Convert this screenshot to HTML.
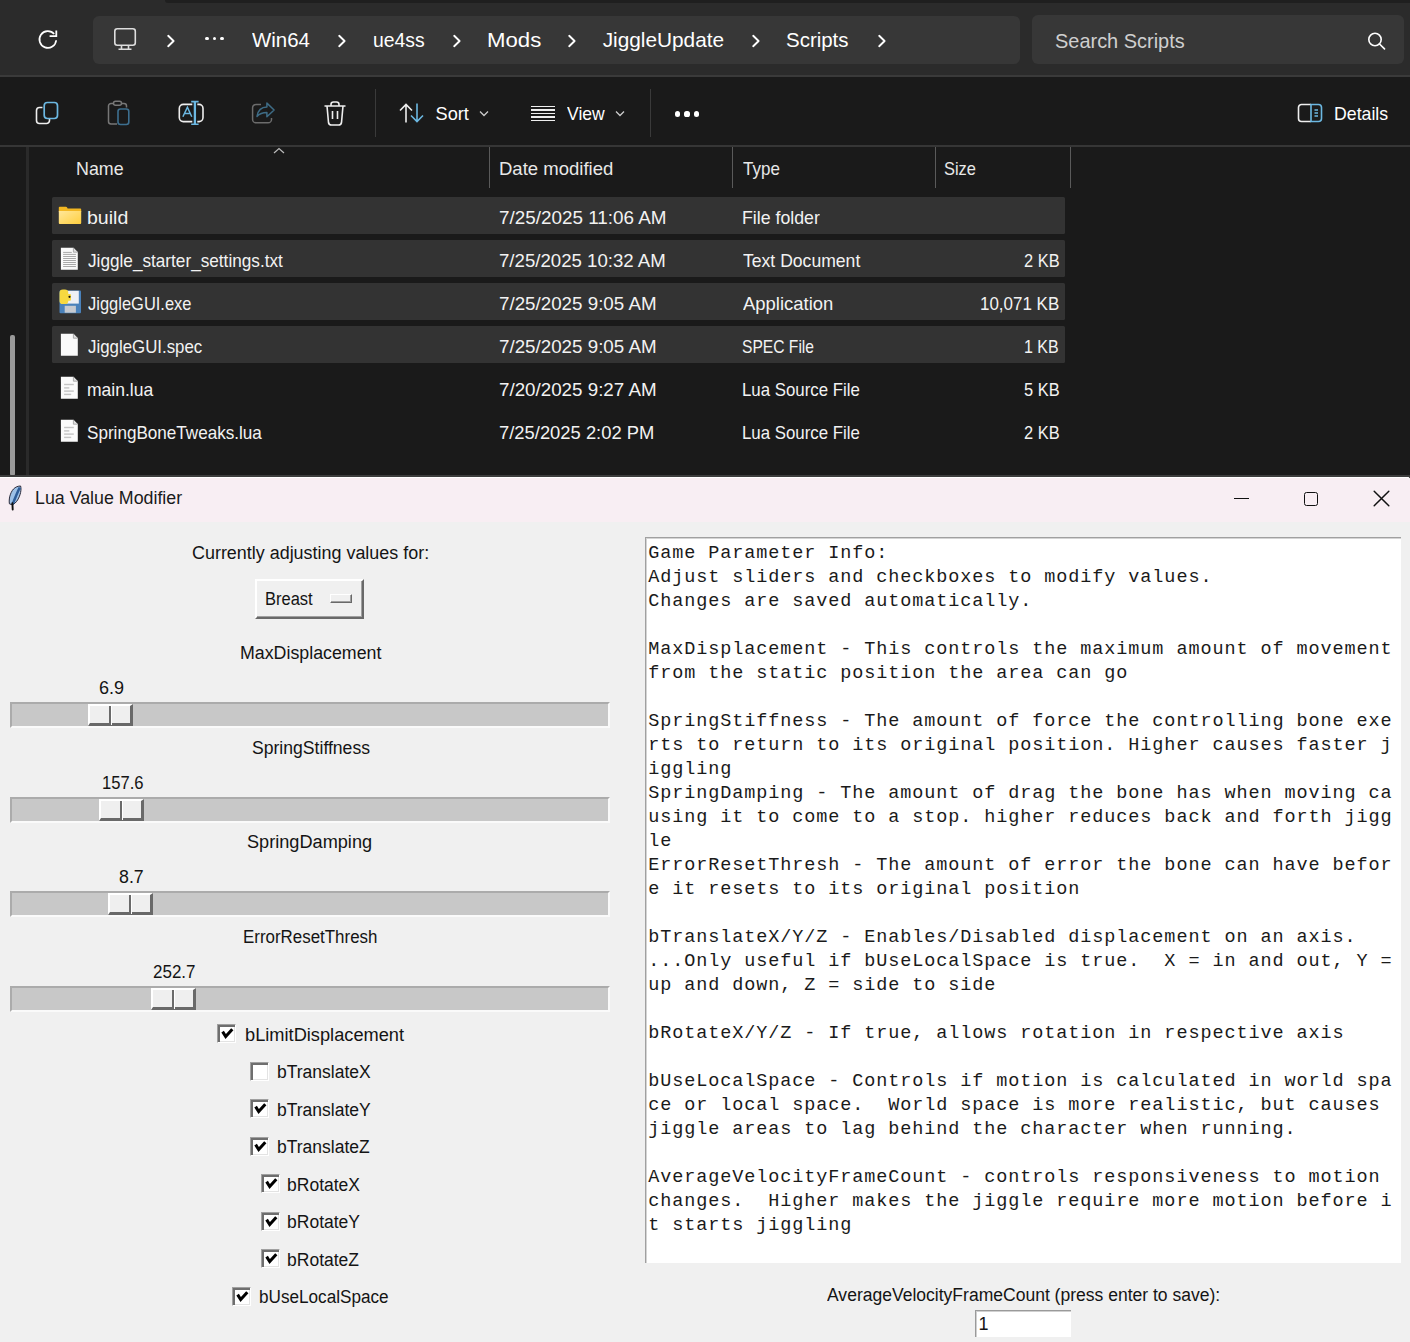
<!DOCTYPE html>
<html><head><meta charset="utf-8"><title>Explorer + Lua Value Modifier</title>
<style>
html,body{margin:0;padding:0}
body{width:1410px;height:1342px;position:relative;overflow:hidden;background:#f0f0f0;font-family:"Liberation Sans",sans-serif}
.t{position:absolute;white-space:nowrap;line-height:1;transform-origin:0 0}
.mono{position:absolute;margin:0;font-family:"Liberation Mono",monospace;font-size:18.5px;letter-spacing:0.9px;line-height:24px;color:#1a1a1a}
</style></head><body>
<div style="position:absolute;left:0px;top:0px;width:1410px;height:490px;background:#1a1a1a"></div>
<div style="position:absolute;left:0px;top:0px;width:1410px;height:75px;background:#2b2b2b"></div>
<div style="position:absolute;left:165px;top:0px;width:1245px;height:3px;background:#1f1f1f;border-bottom-left-radius:4px"></div>
<div style="position:absolute;left:0px;top:75px;width:1410px;height:2px;background:#3a3a3a"></div>
<div style="position:absolute;left:0px;top:145px;width:1410px;height:2px;background:#363636"></div>
<div style="position:absolute;left:93px;top:16px;width:927px;height:48px;background:#373737;border-radius:6px"></div>
<div style="position:absolute;left:1032px;top:15px;width:372px;height:49px;background:#373737;border-radius:6px"></div>
<svg style="position:absolute;left:37px;top:28px" width="24" height="24" viewBox="0 0 24 24"><path d="M19.2 12.2 A8.4 8.4 0 1 1 17.2 6.0" fill="none" stroke="#fff" stroke-width="1.7"/><path d="M12.6 8.2 H19.3 V2.5" fill="none" stroke="#fff" stroke-width="1.8"/></svg>
<svg style="position:absolute;left:113px;top:27px" width="25" height="24" viewBox="0 0 25 24"><rect x="1.8" y="1.8" width="20.5" height="16.5" rx="2.5" fill="none" stroke="#ddd" stroke-width="1.6"/><path d="M8.5 18.5 V22 M15.5 18.5 V22 M5.5 22.3 H18.5" stroke="#ddd" stroke-width="1.6"/></svg>
<svg style="position:absolute;left:165.5px;top:34px" width="10" height="14" viewBox="0 0 10 14"><path d="M2.2 1.8 L7.6 7 L2.2 12.2" fill="none" stroke="#fff" stroke-width="1.9" stroke-linecap="round" stroke-linejoin="round"/></svg>
<svg style="position:absolute;left:336.5px;top:34px" width="10" height="14" viewBox="0 0 10 14"><path d="M2.2 1.8 L7.6 7 L2.2 12.2" fill="none" stroke="#fff" stroke-width="1.9" stroke-linecap="round" stroke-linejoin="round"/></svg>
<svg style="position:absolute;left:451.5px;top:34px" width="10" height="14" viewBox="0 0 10 14"><path d="M2.2 1.8 L7.6 7 L2.2 12.2" fill="none" stroke="#fff" stroke-width="1.9" stroke-linecap="round" stroke-linejoin="round"/></svg>
<svg style="position:absolute;left:566.5px;top:34px" width="10" height="14" viewBox="0 0 10 14"><path d="M2.2 1.8 L7.6 7 L2.2 12.2" fill="none" stroke="#fff" stroke-width="1.9" stroke-linecap="round" stroke-linejoin="round"/></svg>
<svg style="position:absolute;left:750.5px;top:34px" width="10" height="14" viewBox="0 0 10 14"><path d="M2.2 1.8 L7.6 7 L2.2 12.2" fill="none" stroke="#fff" stroke-width="1.9" stroke-linecap="round" stroke-linejoin="round"/></svg>
<svg style="position:absolute;left:876.5px;top:34px" width="10" height="14" viewBox="0 0 10 14"><path d="M2.2 1.8 L7.6 7 L2.2 12.2" fill="none" stroke="#fff" stroke-width="1.9" stroke-linecap="round" stroke-linejoin="round"/></svg>
<div style="position:absolute;left:205.4px;top:37px;width:3.2px;height:3.2px;background:#fff;border-radius:50%"></div>
<div style="position:absolute;left:212.9px;top:37px;width:3.2px;height:3.2px;background:#fff;border-radius:50%"></div>
<div style="position:absolute;left:220.4px;top:37px;width:3.2px;height:3.2px;background:#fff;border-radius:50%"></div>
<div class="t" style="left:251.6px;top:30.2px;font-size:20.8px;color:#fff;transform:scaleX(0.9831);">Win64</div>
<div class="t" style="left:372.8px;top:30.2px;font-size:20.8px;color:#fff;transform:scaleX(0.9315);">ue4ss</div>
<div class="t" style="left:486.8px;top:30.2px;font-size:20.8px;color:#fff;transform:scaleX(1.0667);">Mods</div>
<div class="t" style="left:602.7px;top:30.2px;font-size:20.8px;color:#fff;transform:scaleX(1.0000);">JiggleUpdate</div>
<div class="t" style="left:786.2px;top:30.2px;font-size:20.8px;color:#fff;transform:scaleX(0.9839);">Scripts</div>
<div class="t" style="left:1054.5px;top:30.6px;font-size:20.8px;color:#cfcfcf;transform:scaleX(0.9590);">Search Scripts</div>
<svg style="position:absolute;left:1366px;top:30px" width="22" height="22" viewBox="0 0 22 22"><circle cx="9" cy="9.5" r="6.2" fill="none" stroke="#fff" stroke-width="1.6"/><path d="M13.5 14 L18.5 18.8" stroke="#fff" stroke-width="1.7" stroke-linecap="round"/></svg>
<svg style="position:absolute;left:34px;top:100px" width="28" height="28" viewBox="0 0 28 28"><path d="M8.5 7.5 H5.5 A3 3 0 0 0 2.5 10.5 V20.5 A3 3 0 0 0 5.5 23.5 H12.5 A3 3 0 0 0 15.5 20.5 V19" fill="none" stroke="#eee" stroke-width="1.6"/><rect x="10.2" y="2.5" width="13.3" height="16" rx="3.2" fill="none" stroke="#6cb8e2" stroke-width="1.7"/></svg>
<svg style="position:absolute;left:106px;top:99px" width="28" height="28" viewBox="0 0 28 28"><path d="M7 4.5 H5 A2.5 2.5 0 0 0 2.5 7 V22.5 A2.5 2.5 0 0 0 5 25 H11 M16 4.5 H18 A2.5 2.5 0 0 1 20.5 7 V8.5" fill="none" stroke="#777" stroke-width="1.5"/><rect x="7.5" y="2.2" width="8" height="4" rx="2" fill="none" stroke="#777" stroke-width="1.5"/><rect x="12" y="10" width="10.8" height="15.5" rx="2.5" fill="none" stroke="#3d6f8f" stroke-width="1.6"/></svg>
<svg style="position:absolute;left:172px;top:96px" width="38" height="34" viewBox="0 0 38 34"><path d="M20.3 8.4 H11.3 A4 4 0 0 0 7.3 12.4 V21.6 A4 4 0 0 0 11.3 25.6 H20.3 M25.3 8.4 H27 A4 4 0 0 1 31 12.4 V21.6 A4 4 0 0 1 27 25.6 H25.3" fill="none" stroke="#eee" stroke-width="1.6"/><path d="M22.9 5.8 V28" stroke="#6cb8e2" stroke-width="2.3"/><path d="M19.2 5.6 H26.6 M19.2 28.2 H26.6" stroke="#6cb8e2" stroke-width="1.6"/><path d="M10.9 20.8 L15.4 11.3 L19.8 20.8 M12.4 17.5 H18.4" fill="none" stroke="#6cb8e2" stroke-width="1.5"/></svg>
<svg style="position:absolute;left:246px;top:96px" width="36" height="34" viewBox="0 0 36 34"><path d="M15 8.4 H10 A3.4 3.4 0 0 0 6.6 11.8 V23.4 A3.4 3.4 0 0 0 10 26.8 H22.1 A3.4 3.4 0 0 0 25.5 23.4 V21.9" fill="none" stroke="#6c6c6c" stroke-width="1.5"/><path d="M11 20.4 C12 14 15.5 11 20.9 11 V7.1 L28.1 14 L20.9 20.7 V16.6 C16.5 16.6 13.5 17.8 11 20.4 Z" fill="none" stroke="#3e6c86" stroke-width="1.5" stroke-linejoin="round"/></svg>
<svg style="position:absolute;left:322px;top:100px" width="26" height="28" viewBox="0 0 26 28"><path d="M2.5 6 H23.5 M9 6 V4.5 A2.5 2.5 0 0 1 11.5 2 H14.5 A2.5 2.5 0 0 1 17 4.5 V6 M5 6 L6.5 22.5 A3 3 0 0 0 9.5 25 H16.5 A3 3 0 0 0 19.5 22.5 L21 6 M10.5 11 V19 M15.5 11 V19" fill="none" stroke="#eee" stroke-width="1.6"/></svg>
<div style="position:absolute;left:375px;top:89px;width:1px;height:48px;background:#3a3a3a"></div>
<div style="position:absolute;left:650px;top:89px;width:1px;height:48px;background:#3a3a3a"></div>
<svg style="position:absolute;left:398px;top:102px" width="28" height="22" viewBox="0 0 28 22"><path d="M8 20.5 V2.5 M2 8.5 L8 2.5 L14 8.5" fill="none" stroke="#eee" stroke-width="1.6"/><path d="M19 1.5 V19.5 M13 13.5 L19 19.5 L25 13.5" fill="none" stroke="#6cb8e2" stroke-width="1.6"/></svg>
<div class="t" style="left:435.5px;top:104.8px;font-size:18.2px;color:#fff;transform:scaleX(1.0000);">Sort</div>
<svg style="position:absolute;left:478.5px;top:110px" width="10" height="7" viewBox="0 0 10 7"><path d="M1 1.5 L5 5.5 L9 1.5" fill="none" stroke="#ccc" stroke-width="1.3"/></svg>
<div style="position:absolute;left:531px;top:105.5px;width:24px;height:1.5px;background:#eee"></div>
<div style="position:absolute;left:531px;top:109.1px;width:24px;height:1.5px;background:#eee"></div>
<div style="position:absolute;left:531px;top:112.7px;width:24px;height:1.5px;background:#eee"></div>
<div style="position:absolute;left:531px;top:116.3px;width:24px;height:1.5px;background:#eee"></div>
<div style="position:absolute;left:531px;top:119.9px;width:24px;height:1.5px;background:#eee"></div>
<div class="t" style="left:567.0px;top:104.6px;font-size:18.2px;color:#fff;transform:scaleX(0.9641);">View</div>
<svg style="position:absolute;left:614.5px;top:110px" width="10" height="7" viewBox="0 0 10 7"><path d="M1 1.5 L5 5.5 L9 1.5" fill="none" stroke="#ccc" stroke-width="1.3"/></svg>
<div style="position:absolute;left:674.9px;top:111.4px;width:5.2px;height:5.2px;background:#fff;border-radius:50%"></div>
<div style="position:absolute;left:684.4px;top:111.4px;width:5.2px;height:5.2px;background:#fff;border-radius:50%"></div>
<div style="position:absolute;left:693.9px;top:111.4px;width:5.2px;height:5.2px;background:#fff;border-radius:50%"></div>
<svg style="position:absolute;left:1296px;top:102px" width="28" height="22" viewBox="0 0 28 22"><path d="M15 2.5 H5.5 A3 3 0 0 0 2.5 5.5 V16.5 A3 3 0 0 0 5.5 19.5 H15" fill="none" stroke="#eee" stroke-width="1.6"/><path d="M15 2.5 H22.5 A3 3 0 0 1 25.5 5.5 V16.5 A3 3 0 0 1 22.5 19.5 H15 Z" fill="none" stroke="#6cb8e2" stroke-width="1.6"/><path d="M18.5 8 H22 M18.5 11 H22 M18.5 14 H22" stroke="#6cb8e2" stroke-width="1.4"/></svg>
<div class="t" style="left:1333.8px;top:104.6px;font-size:18.2px;color:#fff;transform:scaleX(0.9741);">Details</div>
<div style="position:absolute;left:26px;top:147px;width:3px;height:328px;background:#2a2a2a"></div>
<div style="position:absolute;left:10px;top:335px;width:5px;height:141px;background:#9a9a9a;border-radius:2px"></div>
<div style="position:absolute;left:489px;top:147px;width:1px;height:41px;background:#5a5a5a"></div>
<div style="position:absolute;left:732px;top:147px;width:1px;height:41px;background:#5a5a5a"></div>
<div style="position:absolute;left:935px;top:147px;width:1px;height:41px;background:#5a5a5a"></div>
<div style="position:absolute;left:1070px;top:147px;width:1px;height:41px;background:#5a5a5a"></div>
<svg style="position:absolute;left:272px;top:147px" width="14" height="8" viewBox="0 0 14 8"><path d="M2 6 L7 1.5 L12 6" fill="none" stroke="#bbb" stroke-width="1.2"/></svg>
<div class="t" style="left:75.5px;top:160.4px;font-size:18.2px;color:#e8e8e8;transform:scaleX(0.9809);">Name</div>
<div class="t" style="left:498.8px;top:159.6px;font-size:18.2px;color:#e8e8e8;transform:scaleX(1.0182);">Date modified</div>
<div class="t" style="left:742.5px;top:159.6px;font-size:18.2px;color:#e8e8e8;transform:scaleX(0.9359);">Type</div>
<div class="t" style="left:944.4px;top:159.6px;font-size:18.2px;color:#e8e8e8;transform:scaleX(0.9029);">Size</div>
<div style="position:absolute;left:52px;top:197px;width:1013px;height:37px;background:#333333;border-radius:1.5px"></div>
<div class="t" style="left:87.2px;top:208.6px;font-size:18.2px;color:#f2f2f2;transform:scaleX(1.0750);">build</div>
<div class="t" style="left:498.8px;top:208.6px;font-size:18.2px;color:#f2f2f2;transform:scaleX(1.0371);">7/25/2025 11:06 AM</div>
<div class="t" style="left:741.5px;top:208.6px;font-size:18.2px;color:#f2f2f2;transform:scaleX(0.9747);">File folder</div>
<svg style="position:absolute;left:54px;top:200px" width="32" height="32" viewBox="0 0 32 32"><defs><linearGradient id="fg0" x1="0" y1="0" x2="1" y2="1"><stop offset="0" stop-color="#ffe79a"/><stop offset="1" stop-color="#ffcf3f"/></linearGradient></defs><path d="M4.8 7.6 A0.9 0.9 0 0 1 5.7 6.7 H12 C12.8 6.7 13.2 7.4 13.6 8.6 H26.3 A0.9 0.9 0 0 1 27.2 9.5 V12 H4.8 Z" fill="#f2b722"/><path d="M4.8 11 H27.2 V23 A0.9 0.9 0 0 1 26.3 23.9 H5.7 A0.9 0.9 0 0 1 4.8 23 Z" fill="url(#fg0)"/></svg>
<div style="position:absolute;left:52px;top:240px;width:1013px;height:37px;background:#333333;border-radius:1.5px"></div>
<div class="t" style="left:88.3px;top:251.6px;font-size:18.2px;color:#f2f2f2;transform:scaleX(0.9447);">Jiggle_starter_settings.txt</div>
<div class="t" style="left:498.8px;top:251.6px;font-size:18.2px;color:#f2f2f2;transform:scaleX(1.0242);">7/25/2025 10:32 AM</div>
<div class="t" style="left:742.5px;top:251.6px;font-size:18.2px;color:#f2f2f2;transform:scaleX(0.9669);">Text Document</div>
<div class="t" style="left:1023.5px;top:251.6px;font-size:18.2px;color:#f2f2f2;transform:scaleX(0.9026);">2 KB</div>
<svg style="position:absolute;left:54px;top:243px" width="32" height="32" viewBox="0 0 32 32"><path d="M6.9 4.8 H19.4 L23.8 9.2 V26.7 H6.9 Z" fill="#fafafa"/><path d="M19.4 4.8 V9.2 H23.8" fill="#e0e0e0" stroke="#9a9a9a" stroke-width="0.8"/><rect x="9.1" y="8.9" width="8.7" height="1" fill="#a9a9a9"/><rect x="9.1" y="10.9" width="12.8" height="1" fill="#a9a9a9"/><rect x="9.1" y="13.0" width="12.8" height="1" fill="#a9a9a9"/><rect x="9.1" y="15.0" width="12.8" height="1" fill="#a9a9a9"/><rect x="9.1" y="17.0" width="12.8" height="1" fill="#a9a9a9"/><rect x="9.1" y="19.0" width="12.8" height="1" fill="#a9a9a9"/><rect x="9.1" y="21.0" width="12.8" height="1" fill="#a9a9a9"/><rect x="9.1" y="23.0" width="12.8" height="1" fill="#a9a9a9"/></svg>
<div style="position:absolute;left:52px;top:283px;width:1013px;height:37px;background:#333333;border-radius:1.5px"></div>
<div class="t" style="left:88.3px;top:294.6px;font-size:18.2px;color:#f2f2f2;transform:scaleX(0.9061);">JiggleGUI.exe</div>
<div class="t" style="left:498.8px;top:294.6px;font-size:18.2px;color:#f2f2f2;transform:scaleX(1.0320);">7/25/2025 9:05 AM</div>
<div class="t" style="left:742.5px;top:294.6px;font-size:18.2px;color:#f2f2f2;transform:scaleX(1.0148);">Application</div>
<div class="t" style="left:980.4px;top:294.6px;font-size:18.2px;color:#f2f2f2;transform:scaleX(0.9325);">10,071 KB</div>
<svg style="position:absolute;left:54px;top:286px" width="32" height="32" viewBox="0 0 32 32"><rect x="5.5" y="4.5" width="21.5" height="22.7" rx="1" fill="#4a82bb"/><rect x="12.6" y="4.8" width="12.2" height="12.8" fill="#eef0f4"/><rect x="10.7" y="19.8" width="11.2" height="6.9" fill="#c6cad0"/><path d="M5.5 7 A3.4 3.4 0 0 1 8.9 3.6 H10.9 A3.4 3.4 0 0 1 14.3 7 V8 H15.8 A1.2 1.2 0 0 1 17 9.2 V13.5 A1.2 1.2 0 0 1 15.8 14.7 H14.3 V15 A3.1 3.1 0 0 1 11.2 18.1 H8.6 A3.1 3.1 0 0 1 5.5 15 Z" fill="#f7d940"/><circle cx="15.5" cy="10.8" r="1.1" fill="#111"/></svg>
<div style="position:absolute;left:52px;top:326px;width:1013px;height:37px;background:#333333;border-radius:1.5px"></div>
<div class="t" style="left:88.3px;top:337.6px;font-size:18.2px;color:#f2f2f2;transform:scaleX(0.9268);">JiggleGUI.spec</div>
<div class="t" style="left:498.8px;top:337.6px;font-size:18.2px;color:#f2f2f2;transform:scaleX(1.0320);">7/25/2025 9:05 AM</div>
<div class="t" style="left:741.6px;top:337.6px;font-size:18.2px;color:#f2f2f2;transform:scaleX(0.8585);">SPEC File</div>
<div class="t" style="left:1024.4px;top:337.6px;font-size:18.2px;color:#f2f2f2;transform:scaleX(0.8789);">1 KB</div>
<svg style="position:absolute;left:54px;top:329px" width="32" height="32" viewBox="0 0 32 32"><path d="M6.9 4.8 H19.4 L23.8 9.2 V26.7 H6.9 Z" fill="#fafafa"/><path d="M19.4 4.8 V9.2 H23.8" fill="#e0e0e0" stroke="#9a9a9a" stroke-width="0.8"/></svg>
<div class="t" style="left:87.3px;top:380.6px;font-size:18.2px;color:#f2f2f2;transform:scaleX(0.9632);">main.lua</div>
<div class="t" style="left:498.8px;top:380.6px;font-size:18.2px;color:#f2f2f2;transform:scaleX(1.0320);">7/20/2025 9:27 AM</div>
<div class="t" style="left:741.6px;top:380.6px;font-size:18.2px;color:#f2f2f2;transform:scaleX(0.9246);">Lua Source File</div>
<div class="t" style="left:1023.5px;top:380.6px;font-size:18.2px;color:#f2f2f2;transform:scaleX(0.9026);">5 KB</div>
<svg style="position:absolute;left:54px;top:372px" width="32" height="32" viewBox="0 0 32 32"><path d="M6.9 4.8 H19.4 L23.8 9.2 V26.7 H6.9 Z" fill="#fafafa"/><path d="M19.4 4.8 V9.2 H23.8" fill="#e0e0e0" stroke="#9a9a9a" stroke-width="0.8"/><rect x="10.1" y="11.8" width="9.7" height="1.4" fill="#c4c4c4"/><rect x="10.1" y="15.2" width="5.2" height="1.4" fill="#c4c4c4"/><rect x="10.1" y="18.4" width="9.7" height="1.4" fill="#c4c4c4"/><rect x="10.1" y="21.7" width="7.1" height="1.4" fill="#c4c4c4"/></svg>
<div class="t" style="left:87.4px;top:423.6px;font-size:18.2px;color:#f2f2f2;transform:scaleX(0.9400);">SpringBoneTweaks.lua</div>
<div class="t" style="left:498.8px;top:423.6px;font-size:18.2px;color:#f2f2f2;transform:scaleX(1.0106);">7/25/2025 2:02 PM</div>
<div class="t" style="left:741.6px;top:423.6px;font-size:18.2px;color:#f2f2f2;transform:scaleX(0.9246);">Lua Source File</div>
<div class="t" style="left:1023.5px;top:423.6px;font-size:18.2px;color:#f2f2f2;transform:scaleX(0.9026);">2 KB</div>
<svg style="position:absolute;left:54px;top:415px" width="32" height="32" viewBox="0 0 32 32"><path d="M6.9 4.8 H19.4 L23.8 9.2 V26.7 H6.9 Z" fill="#fafafa"/><path d="M19.4 4.8 V9.2 H23.8" fill="#e0e0e0" stroke="#9a9a9a" stroke-width="0.8"/><rect x="10.1" y="11.8" width="9.7" height="1.4" fill="#c4c4c4"/><rect x="10.1" y="15.2" width="5.2" height="1.4" fill="#c4c4c4"/><rect x="10.1" y="18.4" width="9.7" height="1.4" fill="#c4c4c4"/><rect x="10.1" y="21.7" width="7.1" height="1.4" fill="#c4c4c4"/></svg>
<div style="position:absolute;left:0px;top:475px;width:1410px;height:2px;background:#3c3c3c"></div>
<div style="position:absolute;left:0px;top:477px;width:1410px;height:865px;background:#f0f0f0;border-top-right-radius:3px"></div>
<div style="position:absolute;left:0px;top:477px;width:1410px;height:45px;background:#f8eef3;border-top-right-radius:3px;box-shadow:inset 0 1px 0 #fff"></div>
<svg style="position:absolute;left:4px;top:482px" width="24" height="32" viewBox="0 0 24 32"><path d="M16.6 4 C17.6 7.5 16.6 13 13.6 18 C12 20.6 10 22.2 8.2 22.8 L5.4 21.8 C4.7 17 6 11 9.5 7 C11.5 5 14 4 16.6 4 Z" fill="#9cc0e6" stroke="#2a2a3a" stroke-width="1"/><path d="M15.8 5.5 C13.5 10 11.5 15 8.6 22.4" fill="none" stroke="#2d5c98" stroke-width="2.6"/><path d="M8.4 21.2 L8.7 27.5" stroke="#111" stroke-width="1.9" stroke-linecap="round"/></svg>
<div class="t" style="left:35.0px;top:489.7px;font-size:17.5px;color:#1a1a1a;transform:scaleX(1.0174);">Lua Value Modifier</div>
<div style="position:absolute;left:1234px;top:497.8px;width:15px;height:1.3px;background:#111"></div>
<div style="position:absolute;left:1303.5px;top:491.5px;width:14.5px;height:14.5px;border:1.4px solid #111;border-radius:2.5px;box-sizing:border-box"></div>
<svg style="position:absolute;left:1373px;top:490px" width="17" height="17" viewBox="0 0 17 17"><path d="M1.2 1.2 L15.8 15.8 M15.8 1.2 L1.2 15.8" stroke="#111" stroke-width="1.5" stroke-linecap="round"/></svg>
<div class="t" style="left:191.9px;top:544.3px;font-size:18px;color:#141414;transform:scaleX(0.9958);">Currently adjusting values for:</div>
<div style="position:absolute;left:255px;top:579px;width:109px;height:40px;background:#f0f0f0;border-top:2px solid #fff;border-left:2px solid #fff;border-right:2px solid #696969;border-bottom:2px solid #696969;box-sizing:border-box;box-shadow:inset -1px -1px 0 #a0a0a0"></div>
<div class="t" style="left:265.4px;top:590.4px;font-size:18px;color:#141414;transform:scaleX(0.9157);">Breast</div>
<div style="position:absolute;left:330px;top:594px;width:22px;height:9px;background:#f0f0f0;border-top:1.5px solid #fff;border-left:1.5px solid #fff;border-right:1.5px solid #696969;border-bottom:1.5px solid #696969;box-sizing:border-box;box-shadow:inset -1px -1px 0 #a0a0a0"></div>
<div class="t" style="left:239.7px;top:644.4px;font-size:18px;color:#141414;transform:scaleX(0.9887);">MaxDisplacement</div>
<div style="position:absolute;left:10px;top:702px;width:600px;height:26px;background:#c8c8c8;border-top:2px solid #ababab;border-left:2px solid #ababab;border-bottom:2px solid #fafafa;border-right:2px solid #fafafa;box-sizing:border-box"></div>
<div style="position:absolute;left:88px;top:704px;width:45px;height:22px;background:#efefef;border-top:2px solid #fff;border-left:2px solid #fff;border-right:3px solid #696969;border-bottom:3px solid #696969;box-sizing:border-box"></div>
<div style="position:absolute;left:109px;top:706px;width:3px;height:19px;border-left:2px solid #6a6a6a;border-right:1px solid #fff;box-sizing:border-box"></div>
<div class="t" style="left:99.0px;top:679.1px;font-size:18px;color:#141414;transform:scaleX(1.0000);">6.9</div>
<div class="t" style="left:251.5px;top:739.4px;font-size:18px;color:#141414;transform:scaleX(0.9773);">SpringStiffness</div>
<div style="position:absolute;left:10px;top:797px;width:600px;height:26px;background:#c8c8c8;border-top:2px solid #ababab;border-left:2px solid #ababab;border-bottom:2px solid #fafafa;border-right:2px solid #fafafa;box-sizing:border-box"></div>
<div style="position:absolute;left:99px;top:799px;width:45px;height:22px;background:#efefef;border-top:2px solid #fff;border-left:2px solid #fff;border-right:3px solid #696969;border-bottom:3px solid #696969;box-sizing:border-box"></div>
<div style="position:absolute;left:120px;top:801px;width:3px;height:19px;border-left:2px solid #6a6a6a;border-right:1px solid #fff;box-sizing:border-box"></div>
<div class="t" style="left:101.7px;top:774.1px;font-size:18px;color:#141414;transform:scaleX(0.9233);">157.6</div>
<div class="t" style="left:247.0px;top:833.4px;font-size:18px;color:#141414;transform:scaleX(1.0082);">SpringDamping</div>
<div style="position:absolute;left:10px;top:891px;width:600px;height:26px;background:#c8c8c8;border-top:2px solid #ababab;border-left:2px solid #ababab;border-bottom:2px solid #fafafa;border-right:2px solid #fafafa;box-sizing:border-box"></div>
<div style="position:absolute;left:108px;top:893px;width:45px;height:22px;background:#efefef;border-top:2px solid #fff;border-left:2px solid #fff;border-right:3px solid #696969;border-bottom:3px solid #696969;box-sizing:border-box"></div>
<div style="position:absolute;left:129px;top:895px;width:3px;height:19px;border-left:2px solid #6a6a6a;border-right:1px solid #fff;box-sizing:border-box"></div>
<div class="t" style="left:119.2px;top:868.1px;font-size:18px;color:#141414;transform:scaleX(0.9870);">8.7</div>
<div class="t" style="left:242.5px;top:928.4px;font-size:18px;color:#141414;transform:scaleX(0.9397);">ErrorResetThresh</div>
<div style="position:absolute;left:10px;top:986px;width:600px;height:26px;background:#c8c8c8;border-top:2px solid #ababab;border-left:2px solid #ababab;border-bottom:2px solid #fafafa;border-right:2px solid #fafafa;box-sizing:border-box"></div>
<div style="position:absolute;left:151px;top:988px;width:45px;height:22px;background:#efefef;border-top:2px solid #fff;border-left:2px solid #fff;border-right:3px solid #696969;border-bottom:3px solid #696969;box-sizing:border-box"></div>
<div style="position:absolute;left:172px;top:990px;width:3px;height:19px;border-left:2px solid #6a6a6a;border-right:1px solid #fff;box-sizing:border-box"></div>
<div class="t" style="left:153.3px;top:963.1px;font-size:18px;color:#141414;transform:scaleX(0.9442);">252.7</div>
<div style="position:absolute;left:217px;top:1024px;width:19px;height:19px;background:#fff;border-top:1px solid #a0a0a0;border-left:1px solid #a0a0a0;border-bottom:1px solid #fff;border-right:1px solid #fff;box-sizing:border-box;box-shadow:inset 2px 2px 0 #6e6e6e,inset -1px -1px 0 #e3e3e3"></div>
<svg style="position:absolute;left:217px;top:1024px" width="19" height="19" viewBox="0 0 19 19"><path d="M5.6 7.6 L8.7 12.6 L15.3 5.2" fill="none" stroke="#000" stroke-width="3" stroke-linejoin="miter"/></svg>
<div class="t" style="left:244.6px;top:1026.0px;font-size:18px;color:#141414;transform:scaleX(1.0128);">bLimitDisplacement</div>
<div style="position:absolute;left:250px;top:1062px;width:19px;height:19px;background:#fff;border-top:1px solid #a0a0a0;border-left:1px solid #a0a0a0;border-bottom:1px solid #fff;border-right:1px solid #fff;box-sizing:border-box;box-shadow:inset 2px 2px 0 #6e6e6e,inset -1px -1px 0 #e3e3e3"></div>
<div class="t" style="left:277.0px;top:1063.4px;font-size:18px;color:#141414;transform:scaleX(0.9726);">bTranslateX</div>
<div style="position:absolute;left:250px;top:1099px;width:19px;height:19px;background:#fff;border-top:1px solid #a0a0a0;border-left:1px solid #a0a0a0;border-bottom:1px solid #fff;border-right:1px solid #fff;box-sizing:border-box;box-shadow:inset 2px 2px 0 #6e6e6e,inset -1px -1px 0 #e3e3e3"></div>
<svg style="position:absolute;left:250px;top:1099px" width="19" height="19" viewBox="0 0 19 19"><path d="M5.6 7.6 L8.7 12.6 L15.3 5.2" fill="none" stroke="#000" stroke-width="3" stroke-linejoin="miter"/></svg>
<div class="t" style="left:277.0px;top:1100.9px;font-size:18px;color:#141414;transform:scaleX(0.9726);">bTranslateY</div>
<div style="position:absolute;left:250px;top:1137px;width:19px;height:19px;background:#fff;border-top:1px solid #a0a0a0;border-left:1px solid #a0a0a0;border-bottom:1px solid #fff;border-right:1px solid #fff;box-sizing:border-box;box-shadow:inset 2px 2px 0 #6e6e6e,inset -1px -1px 0 #e3e3e3"></div>
<svg style="position:absolute;left:250px;top:1137px" width="19" height="19" viewBox="0 0 19 19"><path d="M5.6 7.6 L8.7 12.6 L15.3 5.2" fill="none" stroke="#000" stroke-width="3" stroke-linejoin="miter"/></svg>
<div class="t" style="left:277.0px;top:1138.3px;font-size:18px;color:#141414;transform:scaleX(0.9726);">bTranslateZ</div>
<div style="position:absolute;left:261px;top:1174px;width:19px;height:19px;background:#fff;border-top:1px solid #a0a0a0;border-left:1px solid #a0a0a0;border-bottom:1px solid #fff;border-right:1px solid #fff;box-sizing:border-box;box-shadow:inset 2px 2px 0 #6e6e6e,inset -1px -1px 0 #e3e3e3"></div>
<svg style="position:absolute;left:261px;top:1174px" width="19" height="19" viewBox="0 0 19 19"><path d="M5.6 7.6 L8.7 12.6 L15.3 5.2" fill="none" stroke="#000" stroke-width="3" stroke-linejoin="miter"/></svg>
<div class="t" style="left:287.0px;top:1175.8px;font-size:18px;color:#141414;transform:scaleX(0.9730);">bRotateX</div>
<div style="position:absolute;left:261px;top:1212px;width:19px;height:19px;background:#fff;border-top:1px solid #a0a0a0;border-left:1px solid #a0a0a0;border-bottom:1px solid #fff;border-right:1px solid #fff;box-sizing:border-box;box-shadow:inset 2px 2px 0 #6e6e6e,inset -1px -1px 0 #e3e3e3"></div>
<svg style="position:absolute;left:261px;top:1212px" width="19" height="19" viewBox="0 0 19 19"><path d="M5.6 7.6 L8.7 12.6 L15.3 5.2" fill="none" stroke="#000" stroke-width="3" stroke-linejoin="miter"/></svg>
<div class="t" style="left:287.0px;top:1213.2px;font-size:18px;color:#141414;transform:scaleX(0.9730);">bRotateY</div>
<div style="position:absolute;left:261px;top:1249px;width:19px;height:19px;background:#fff;border-top:1px solid #a0a0a0;border-left:1px solid #a0a0a0;border-bottom:1px solid #fff;border-right:1px solid #fff;box-sizing:border-box;box-shadow:inset 2px 2px 0 #6e6e6e,inset -1px -1px 0 #e3e3e3"></div>
<svg style="position:absolute;left:261px;top:1249px" width="19" height="19" viewBox="0 0 19 19"><path d="M5.6 7.6 L8.7 12.6 L15.3 5.2" fill="none" stroke="#000" stroke-width="3" stroke-linejoin="miter"/></svg>
<div class="t" style="left:287.0px;top:1250.7px;font-size:18px;color:#141414;transform:scaleX(0.9730);">bRotateZ</div>
<div style="position:absolute;left:232px;top:1287px;width:19px;height:19px;background:#fff;border-top:1px solid #a0a0a0;border-left:1px solid #a0a0a0;border-bottom:1px solid #fff;border-right:1px solid #fff;box-sizing:border-box;box-shadow:inset 2px 2px 0 #6e6e6e,inset -1px -1px 0 #e3e3e3"></div>
<svg style="position:absolute;left:232px;top:1287px" width="19" height="19" viewBox="0 0 19 19"><path d="M5.6 7.6 L8.7 12.6 L15.3 5.2" fill="none" stroke="#000" stroke-width="3" stroke-linejoin="miter"/></svg>
<div class="t" style="left:258.6px;top:1288.1px;font-size:18px;color:#141414;transform:scaleX(0.9522);">bUseLocalSpace</div>
<div style="position:absolute;left:645px;top:537px;width:756px;height:726px;background:#fff;border-top:1px solid #a0a0a0;border-left:1px solid #a0a0a0;box-sizing:border-box;box-shadow:inset 1px 1px 0 #d4d4d4"></div>
<pre class="mono" style="left:648.3px;top:542.1px">Game Parameter Info:
Adjust sliders and checkboxes to modify values.
Changes are saved automatically.

MaxDisplacement - This controls the maximum amount of movement
from the static position the area can go

SpringStiffness - The amount of force the controlling bone exe
rts to return to its original position. Higher causes faster j
iggling
SpringDamping - The amount of drag the bone has when moving ca
using it to come to a stop. higher reduces back and forth jigg
le
ErrorResetThresh - The amount of error the bone can have befor
e it resets to its original position

bTranslateX/Y/Z - Enables/Disabled displacement on an axis.
...Only useful if bUseLocalSpace is true.  X = in and out, Y =
up and down, Z = side to side

bRotateX/Y/Z - If true, allows rotation in respective axis

bUseLocalSpace - Controls if motion is calculated in world spa
ce or local space.  World space is more realistic, but causes
jiggle areas to lag behind the character when running.

AverageVelocityFrameCount - controls responsiveness to motion
changes.  Higher makes the jiggle require more motion before i
t starts jiggling</pre>
<div class="t" style="left:827.3px;top:1286.0px;font-size:18px;color:#141414;transform:scaleX(0.9736);">AverageVelocityFrameCount (press enter to save):</div>
<div style="position:absolute;left:975px;top:1310px;width:96px;height:27px;background:#fff;border-top:1px solid #9a9a9a;border-left:1px solid #9a9a9a;box-sizing:border-box;box-shadow:inset 1px 1px 0 #d0d0d0"></div>
<div class="t" style="left:978.5px;top:1315.3px;font-size:18px;color:#141414;">1</div>
</body></html>
